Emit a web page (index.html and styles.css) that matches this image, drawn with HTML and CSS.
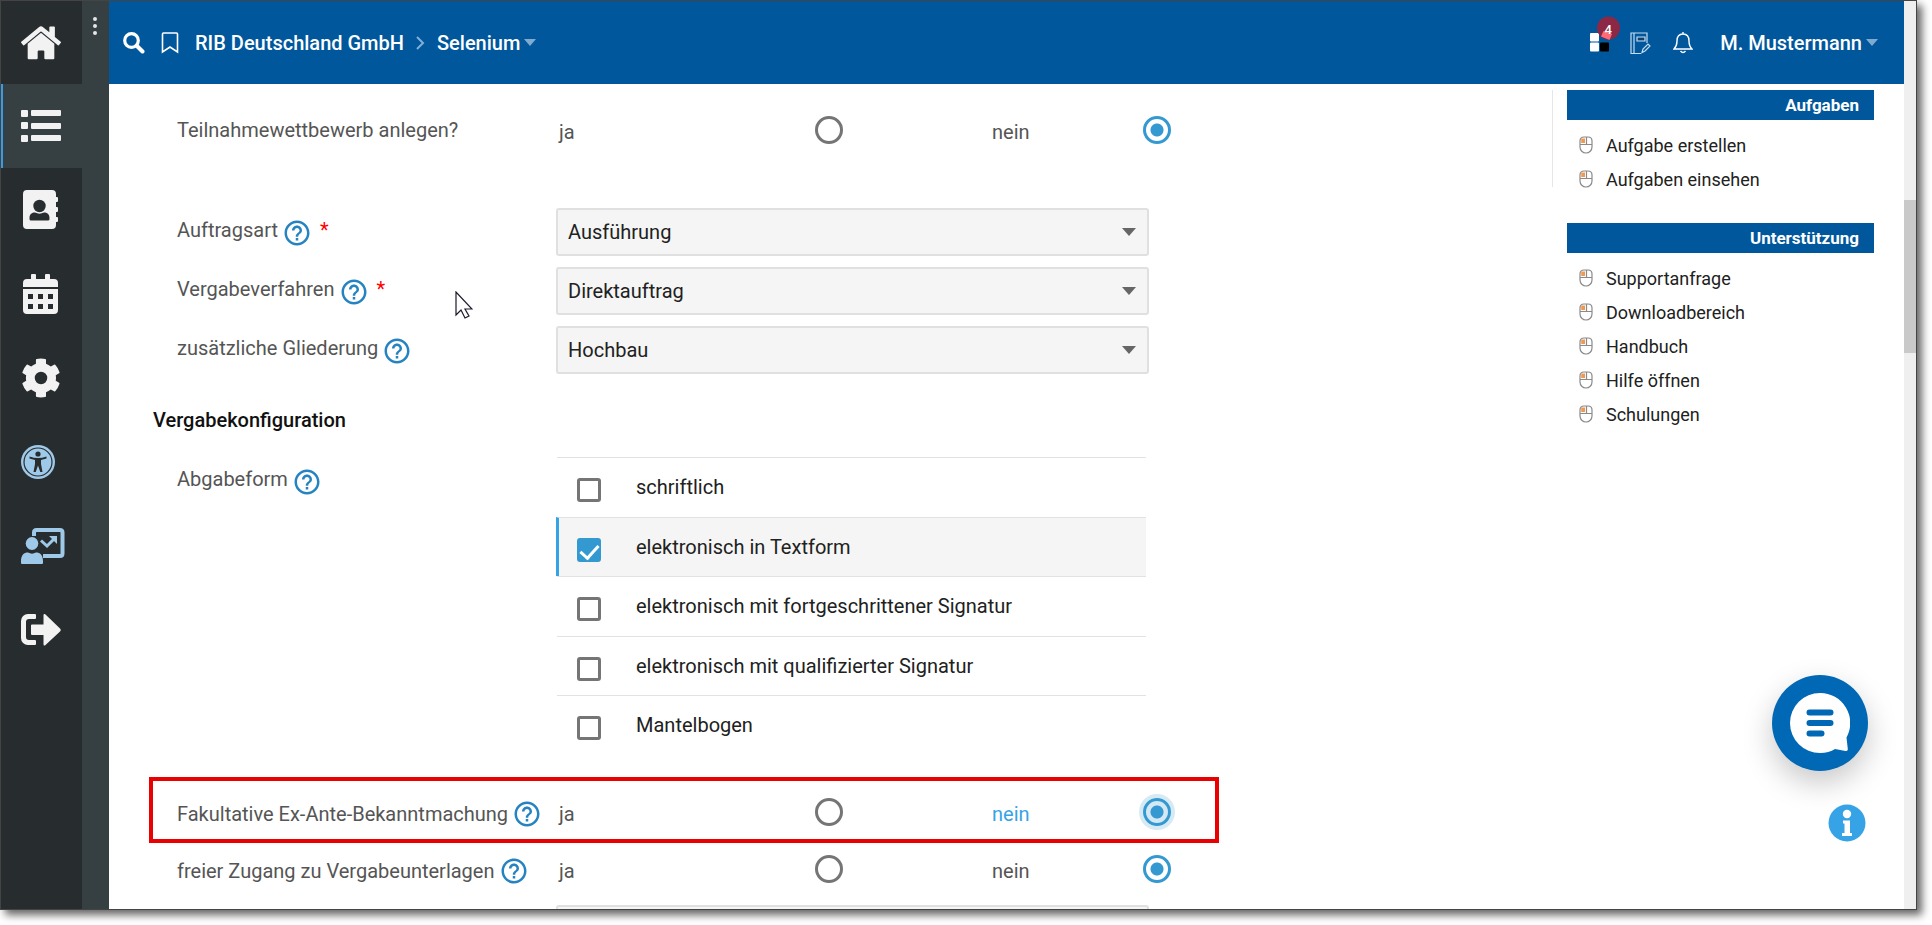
FILE: index.html
```html
<!DOCTYPE html>
<html lang="de">
<head>
<meta charset="utf-8">
<title>Selenium – RIB Deutschland GmbH</title>
<link rel="stylesheet" href="styles.css">
</head>
<body>
<svg class="defs" aria-hidden="true">
  <symbol id="help" viewBox="0 0 24 24"><path d="M11 18h2v-2h-2v2zm1-16C6.480 2 2 6.480 2 12s4.480 10 10 10 10-4.480 10-10S17.520 2 12 2zm0 18c-4.410 0-8-3.590-8-8s3.590-8 8-8 8 3.590 8 8-3.590 8-8 8zm0-14c-2.210 0-4 1.790-4 4h2c0-1.100.9-2 2-2s2 .9 2 2c0 2-3 1.750-3 5h2c0-2.250 3-2.500 3-5 0-2.210-1.790-4-4-4z"/></symbol>
  <symbol id="mouse" viewBox="0 0 14 18"><path d="M1 5q0-4 4-4h4q4 0 4 4v6a6 6 0 0 1-12 0z" fill="#fff" stroke="#8a8a8a" stroke-width="1.200"/><path d="M2.200 7V3.500q0-1 1-1H6V7z" fill="#f2994f"/><path d="M1 8.500h12M7.500 1v7" stroke="#8a8a8a" stroke-width="1.200"/></symbol>
</svg>
<div class="window">
  <nav class="sidebar" aria-label="Hauptmenü">
    <a class="nav-item" href="#" aria-label="Start"><svg width="40" height="34" viewBox="0 0 576 490" fill="#f2f2f2"><path d="M280 105 96 256v208a16 16 0 0 0 16 16h112a16 16 0 0 0 16-16v-96a16 16 0 0 1 16-16h64a16 16 0 0 1 16 16v96a16 16 0 0 0 16 16h112a16 16 0 0 0 16-16V256L296 105a12 12 0 0 0-16 0zM572 226l-84-69V19a12 12 0 0 0-12-12h-56a12 12 0 0 0-12 12v72l-90-74a48 48 0 0 0-61 0L4 226a12 12 0 0 0-1 17l25 31a12 12 0 0 0 17 2L280 83a12 12 0 0 1 16 0l235 193a12 12 0 0 0 17-2l26-31a12 12 0 0 0-2-17z"/></svg></a>
    <a class="nav-item active" href="#" aria-label="Liste"><svg width="40" height="34" viewBox="0 0 40 34" fill="#f2f2f2"><rect y="1" width="7" height="7" rx="1"/><rect y="13" width="7" height="7" rx="1"/><rect y="26" width="7" height="7" rx="1"/><rect x="10" y="1" width="30" height="6" rx="1"/><rect x="10" y="14" width="30" height="6" rx="1"/><rect x="10" y="26" width="30" height="6" rx="1"/></svg></a>
    <a class="nav-item" href="#" aria-label="Adressbuch"><svg width="36" height="40" viewBox="0 0 36 40"><path d="M4 0h25a4 4 0 0 1 4 4v3h1q1 0 1 1v3q0 1-1 1h-1v5h1q1 0 1 1v3q0 1-1 1h-1v5h1q1 0 1 1v3q0 1-1 1h-1v3a4 4 0 0 1-4 4H4a4 4 0 0 1-4-4V4a4 4 0 0 1 4-4z" fill="#f2f2f2"/><circle cx="16.500" cy="16" r="6.200" fill="#272c2e"/><path d="M6.500 29v-1c0-4 2.500-5.500 5.500-5.500 3 1.500 6 1.500 9 0 3 0 5.500 1.500 5.500 5.500v1q0 1.500-1.500 1.500H8q-1.500 0-1.500-1.500z" fill="#272c2e"/></svg></a>
    <a class="nav-item" href="#" aria-label="Kalender"><svg width="36" height="40" viewBox="0 0 36 40"><path d="M0 13V9a4 4 0 0 1 4-4h4V1q0-1 1-1h3q1 0 1 1v4h9V1q0-1 1-1h3q1 0 1 1v4h4a4 4 0 0 1 4 4v4zM0 15h35v21a4 4 0 0 1-4 4H4a4 4 0 0 1-4-4z" fill="#f2f2f2"/><path d="M5 20h5v5H5zm10 0h5v5h-5zm10 0h5v5h-5zM5 30h5v5H5zm10 0h5v5h-5zm10 0h5v5h-5z" fill="#272c2e"/></svg></a>
    <a class="nav-item" href="#" aria-label="Einstellungen"><svg width="40" height="40" viewBox="0 0 512 512" fill="#f2f2f2"><path d="M487 316l-42-25a192 192 0 0 0 0-70l42-25a12 12 0 0 0 6-14 250 250 0 0 0-55-95 12 12 0 0 0-15-2l-42 24a188 188 0 0 0-61-35V26a12 12 0 0 0-10-12 252 252 0 0 0-110 0 12 12 0 0 0-9 12v48a195 195 0 0 0-61 35L88 85a12 12 0 0 0-15 2 248 248 0 0 0-55 95 12 12 0 0 0 6 14l42 25a192 192 0 0 0 0 70l-42 25a12 12 0 0 0-6 14 250 250 0 0 0 55 95 12 12 0 0 0 15 2l42-24a188 188 0 0 0 61 35v48a12 12 0 0 0 9 12 252 252 0 0 0 110 0 12 12 0 0 0 10-12v-48a195 195 0 0 0 61-35l42 24a12 12 0 0 0 15-2 248 248 0 0 0 55-95 12 12 0 0 0-6-14zM256 336a80 80 0 1 1 0-160 80 80 0 0 1 0 160z"/></svg></a>
    <a class="nav-item left" href="#" aria-label="Barrierefreiheit"><svg width="34" height="34" viewBox="0 0 34 34"><circle cx="17" cy="17" r="17" fill="#9fc9e8"/><circle cx="17" cy="17" r="14" fill="none" stroke="#272c2e" stroke-width="1.200"/><circle cx="17" cy="9" r="2.600" fill="#272c2e"/><path d="M8.500 11.500q8.500 3 17 0v2l-5.500 1.500v4l1.500 8h-2.200L17 20.500 14.700 27h-2.200l1.500-8v-4l-5.500-1.500z" fill="#272c2e"/></svg></a>
    <a class="nav-item wide" href="#" aria-label="Schulung"><svg width="44" height="36" viewBox="0 0 44 36" fill="#9fc9e8"><path d="M13 8V4.500Q13 2 15.500 2H39q2.500 0 2.500 2.500v21Q41.500 28 39 28H22" fill="none" stroke="#9fc9e8" stroke-width="4"/><ellipse cx="11" cy="15.500" rx="6.300" ry="6.500"/><path d="M0 35v-2c0-6 3-8.500 7-8.500 3 1.500 5 1.500 8 0 4 0 7 2.500 7 8.500v2q0 1-1 1H1q-1 0-1-1z"/><path d="M20 12.500l6 5.500 7-7" fill="none" stroke="#9fc9e8" stroke-width="3"/><path d="M28 8h8v8z"/></svg></a>
    <a class="nav-item" href="#" aria-label="Abmelden"><svg width="40" height="32" viewBox="0 0 40 32" fill="#f2f2f2"><path d="M14 0H7a7 7 0 0 0-7 7v17a7 7 0 0 0 7 7h7q1 0 1-1v-3q0-1-1-1H8q-3 0-3-3V8q0-3 3-3h6q1 0 1-1V1q0-1-1-1z"/><path d="M11 10.500h11.500V1.500q0-2.500 2-1L39 14.500q1.500 1.500 0 3L24.500 31q-2 1.500-2-1v-9H11q-1 0-1-1v-8.500q0-1 1-1z"/></svg></a>
  </nav>
  <div class="rail"><button class="more" aria-label="Mehr"><i></i><i></i><i></i></button></div>
  <div class="main">
    <header class="topbar">
      <button class="icon-btn search" aria-label="Suche"><svg width="22" height="22" viewBox="0 0 22 22" fill="none" stroke="#fff"><circle cx="8.500" cy="8.500" r="6.800" stroke-width="3.200"/><path d="M14 14l5.500 5.500" stroke-width="4" stroke-linecap="round"/></svg></button>
      <button class="icon-btn mark" aria-label="Lesezeichen"><svg width="18" height="22" viewBox="0 0 18 22" fill="none" stroke="#fff" stroke-width="1.600"><path d="M1.500 20V2q0-1 1-1h13q1 0 1 1v18L9 15z"/></svg></button>
      <a class="crumb" href="#">RIB Deutschland GmbH</a>
      <svg class="chev" width="9" height="14" viewBox="0 0 9 14" fill="none" stroke="#7fb0da" stroke-width="2"><path d="M1 1l6 6-6 6"/></svg>
      <a class="crumb" href="#">Selenium</a>
      <span class="caret"></span>
      <div class="tools">
        <button class="icon-btn apps" aria-label="Anwendungen"><svg width="31" height="36" viewBox="0 0 31 36"><rect y="17" width="9" height="8.500" rx="1" fill="#fff"/><rect y="26.500" width="9" height="9" rx="1" fill="#fff"/><rect x="10" y="26.500" width="9" height="9" rx="1" fill="#000"/><circle cx="18.500" cy="12" r="11.500" fill="#8c2846"/><path d="M13.500 15l8.500 3-2.500 6-8.500-3.500z" fill="#ff6b74"/></svg><span class="badge">4</span></button>
        <button class="icon-btn notes" aria-label="Notizen"><svg width="21" height="22" viewBox="0 0 21 22" fill="none" stroke="#c6dcf0" stroke-width="1.200"><path d="M17 11V1H1v20.500h10M4 1v20.500M7 5h8v4H7zM12 20.500l1-3.500 5-5 2 2-5 5z"/><path d="M8 7h6" stroke="#1b3c5c" stroke-width="2"/></svg></button>
        <button class="icon-btn bell" aria-label="Benachrichtigungen"><svg width="20" height="22" viewBox="0 0 20 22" fill="none" stroke="#fff" stroke-width="1.400"><path d="M10 0v2M10 2C6 2 4 5 4 9c0 4-1 6-3 8h18c-2-2-3-4-3-8 0-4-2-7-6-7zM7.500 19q2.500 3 5 0"/></svg></button>
        <button class="user">M. Mustermann<span class="caret"></span></button>
      </div>
    </header>
    <div class="content">
      <form class="form">
        <div class="row radio-row first">
          <span class="label">Teilnahmewettbewerb anlegen?</span>
          <label class="opt" for="t1">ja</label><input type="radio" name="t" id="t1">
          <label class="opt no" for="t2">nein</label><input type="radio" name="t" id="t2" checked>
        </div>
        <div class="row">
          <label class="label" for="s1">Auftragsart <svg class="help"><use href="#help"/></svg><b class="req">*</b></label>
          <div class="select"><select id="s1"><option>Ausführung</option></select></div>
        </div>
        <div class="row">
          <label class="label" for="s2">Vergabeverfahren <svg class="help"><use href="#help"/></svg><b class="req">*</b></label>
          <div class="select"><select id="s2"><option>Direktauftrag</option></select></div>
        </div>
        <div class="row">
          <label class="label" for="s3">zusätzliche Gliederung <svg class="help"><use href="#help"/></svg></label>
          <div class="select"><select id="s3"><option>Hochbau</option></select></div>
        </div>
        <h2 class="section">Vergabekonfiguration</h2>
        <div class="row list-row">
          <span class="label">Abgabeform <svg class="help"><use href="#help"/></svg></span>
          <ul class="checks">
            <li><input type="checkbox" id="c1"><label for="c1">schriftlich</label></li>
            <li class="on"><input type="checkbox" id="c2" checked><label for="c2">elektronisch in Textform</label></li>
            <li><input type="checkbox" id="c3"><label for="c3">elektronisch mit fortgeschrittener Signatur</label></li>
            <li><input type="checkbox" id="c4"><label for="c4">elektronisch mit qualifizierter Signatur</label></li>
            <li><input type="checkbox" id="c5"><label for="c5">Mantelbogen</label></li>
          </ul>
        </div>
        <div class="row radio-row marked">
          <span class="label">Fakultative Ex-Ante-Bekanntmachung <svg class="help"><use href="#help"/></svg></span>
          <label class="opt" for="f1">ja</label><input type="radio" name="f" id="f1">
          <label class="opt no current" for="f2">nein</label><input class="focus" type="radio" name="f" id="f2" checked>
        </div>
        <div class="row radio-row last">
          <span class="label">freier Zugang zu Vergabeunterlagen <svg class="help"><use href="#help"/></svg></span>
          <label class="opt" for="z1">ja</label><input type="radio" name="z" id="z1">
          <label class="opt no" for="z2">nein</label><input type="radio" name="z" id="z2" checked>
        </div>
        <div class="row">
          <span class="label"></span>
          <div class="select"><select aria-label="Auswahl"><option></option></select></div>
        </div>
      </form>
      <div class="divider"></div>
      <aside class="side">
        <h3>Aufgaben</h3>
        <ul>
          <li><svg><use href="#mouse"/></svg><a href="#">Aufgabe erstellen</a></li>
          <li><svg><use href="#mouse"/></svg><a href="#">Aufgaben einsehen</a></li>
        </ul>
        <h3>Unterstützung</h3>
        <ul>
          <li><svg><use href="#mouse"/></svg><a href="#">Supportanfrage</a></li>
          <li><svg><use href="#mouse"/></svg><a href="#">Downloadbereich</a></li>
          <li><svg><use href="#mouse"/></svg><a href="#">Handbuch</a></li>
          <li><svg><use href="#mouse"/></svg><a href="#">Hilfe öffnen</a></li>
          <li><svg><use href="#mouse"/></svg><a href="#">Schulungen</a></li>
        </ul>
      </aside>
    </div>
  </div>
  <div class="scroll"><div class="thumb"></div></div>
  <button class="chat" aria-label="Chat"><svg width="60" height="60" viewBox="0 0 60 60"><path d="M30 0a30 30 0 1 0 0 60c6 0 11-1.500 15-4l10.500 2q2.500.5 2.300-2L56.500 44.500A30 30 0 0 0 30 0z" fill="#fff"/><path d="M19.500 19.500h21M19.500 30h21M19.500 40.500h12" stroke="#0068b4" stroke-width="6" stroke-linecap="round"/></svg></button>
  <button class="info" aria-label="Information"><svg width="38" height="38" viewBox="0 0 38 38"><circle cx="19" cy="19" r="18.500" fill="#36a3e6"/><circle cx="19" cy="10" r="4.200" fill="#fff"/><path d="M15 16.500h7V29h2v3H14v-3h2.500v-9.500H15z" fill="#fff"/></svg></button>
  <svg class="pointer" width="18" height="28" viewBox="0 0 18 28"><path d="M1 1v23l5-5 4 8 4-2-4-7h7z" fill="#fff" stroke="#1a1a2a" stroke-width="1.200"/></svg>
</div>
</body>
</html>
```
FILE: styles.css
```css
* { box-sizing: border-box; }
html, body { height: 100%; }
body {
  margin: 0;
  padding: 0 15px 15px 0;
  background: #fff;
  color: #212121;
  font: 20px/24px Roboto, "Liberation Sans", sans-serif;
  overflow: hidden;
}
a { color: inherit; text-decoration: none; }
button { border: 0; padding: 0; background: none; color: inherit; font: inherit; }
svg { display: block; flex: none; }
ul { list-style: none; margin: 0; padding: 0; }
.defs { position: absolute; width: 0; height: 0; }

.window {
  position: relative;
  display: flex;
  height: 100%;
  border: 1px solid #444;
  box-shadow: 5px 5px 8px rgba(0, 0, 0, .6);
}

.sidebar { width: 81px; background: #272c2e; }
.nav-item { display: flex; align-items: center; justify-content: center; height: 84px; padding-right: 2px; }
.nav-item:first-child { height: 83px; }
.nav-item.active { background: #363f42; border-left: 2px solid #3a9be0; padding-right: 4px; }
.nav-item.left { padding-right: 8px; }
.nav-item.wide { padding: 0 0 0 2px; }
.rail { width: 27px; background: #363f42; }
.more { display: flex; flex-direction: column; align-items: center; gap: 3px; width: 26px; padding-top: 16px; }
.more i { width: 4px; height: 4px; border-radius: 50%; background: #e6e6e6; }

.main { flex: 1; min-width: 0; display: flex; flex-direction: column; overflow: hidden; }
.topbar {
  flex: none;
  display: flex;
  align-items: center;
  height: 83px;
  padding: 0 26px 0 14px;
  background: #00579c;
  color: #fff;
  font-weight: 500;
}
.mark { margin: 0 16px 0 16px; }
.chev { margin: 0 12px 0 12px; }
.caret {
  display: inline-block;
  margin-left: 4px;
  border: 6px solid transparent;
  border-top: 7px solid #80abd0;
  border-bottom: 0;
}
.tools { display: flex; align-items: center; margin-left: auto; }
.apps { position: relative; margin: -18px 9px 0 0; }
.badge { position: absolute; left: 12px; top: 4px; width: 12px; font-size: 13px; line-height: 20px; text-align: center; }
.notes { margin-right: 22px; }
.bell { margin-right: 27px; }
.user { display: flex; align-items: center; }

.content { flex: 1; min-height: 0; display: flex; padding-right: 30px; overflow: hidden; }
.form { width: 1110px; padding-left: 40px; }
.row { display: flex; padding-left: 28px; margin-bottom: 11px; }
.label { flex: none; display: flex; align-items: flex-start; width: 379px; padding-top: 10px; color: #555; }
.help { width: 30px; height: 30px; margin-left: 4px; fill: #2683c1; }
.req { margin-left: 8px; color: #f00; font-weight: 400; }

.select { position: relative; width: 593px; }
.select::after {
  content: "";
  position: absolute; right: 13px; top: 20px;
  border: 7px solid transparent;
  border-top: 8px solid #666;
  border-bottom: 0;
  pointer-events: none;
}
select {
  appearance: none;
  display: block;
  width: 100%;
  height: 48px;
  padding: 0 32px 0 10px;
  border: 2px solid #e0e0e0;
  border-radius: 3px;
  color: #212121;
  font: inherit;
  background: #f5f5f5;
}

.radio-row { align-items: center; margin: 0; }
.radio-row .label { padding: 0; align-items: center; }
.opt { width: 259px; padding: 4px 0 0 3px; color: #555; }
.opt.no { width: 151px; margin-left: 149px; padding-left: 0; }
.opt.current { color: #36a3e6; }
.first { padding-top: 32px; margin-bottom: 64px; }

input { appearance: none; flex: none; margin: 0; }
input[type="radio"] { width: 28px; height: 28px; border: 3px solid #757575; border-radius: 50%; }
input[type="radio"]:checked { border-color: #3499d0; background: radial-gradient(circle, #3499d0 6px, #fff 7px); }
input[type="radio"].focus { background: radial-gradient(circle, #3499d0 6px, #d3e8f4 7px); box-shadow: 0 0 0 4px #d6eaf5; }
input[type="checkbox"] { display: grid; justify-content: center; width: 24px; height: 24px; border: 3px solid #757575; border-radius: 3px; background: #fff; }
input[type="checkbox"]:checked { border-color: #3499d0; background: #3499d0; }
input[type="checkbox"]:checked::after {
  content: "";
  width: 8px;
  height: 15px;
  border: solid #fff;
  border-width: 0 3px 3px 0;
  transform: rotate(42deg);
}

.section { margin: 34px 0 25px 4px; font-size: 20px; line-height: 24px; font-weight: 500; color: #111; }
.list-row { margin-bottom: 22px; }
.checks { width: 590px; }
.checks li { display: flex; height: 60px; padding-left: 20px; margin-left: 1px; border-top: 1px solid #e2e2e2; }
.checks li:nth-child(even) { height: 59px; }
.checks .on { margin-left: 0; padding-left: 18px; border-left: 3px solid #36a3e6; background: #f5f5f5; }
.checks input { margin: 20px 35px 0 0; }
.checks label { padding-top: 17px; }

.marked { width: 1070px; height: 66px; padding: 4px 0 0 24px; border: 4px solid #e90000; }
.last { height: 62px; padding-bottom: 10px; }
.marked .label, .last .label { padding-top: 4px; }

.divider { width: 1px; height: 97px; margin: 6px 0 0 auto; background: #e6e6e6; }
.side { width: 307px; margin-left: 14px; padding-top: 6px; font-size: 18px; }
.side h3 { margin: 0 0 9px; padding: 0 15px; background: #00579c; color: #fff; font-size: 17px; line-height: 30px; font-weight: 700; text-align: right; }
.side ul { margin-bottom: 26px; }
.side li { display: flex; align-items: center; height: 34px; padding-left: 12px; }
.side li svg { width: 14px; height: 18px; margin: 0 13px 2px 0; }

.scroll { width: 12px; padding-top: 199px; background: #efefef; }
.thumb { height: 153px; background: #c9c9c9; }

.chat {
  position: absolute; right: 48px; bottom: 138px;
  display: grid; place-items: center;
  width: 96px; height: 96px; border-radius: 50%;
  background: #0068b4;
  box-shadow: 0 12px 30px rgba(0, 0, 0, .22);
}
.info { position: absolute; right: 50px; bottom: 67px; }
.pointer { position: absolute; left: 454px; top: 290px; }
```
